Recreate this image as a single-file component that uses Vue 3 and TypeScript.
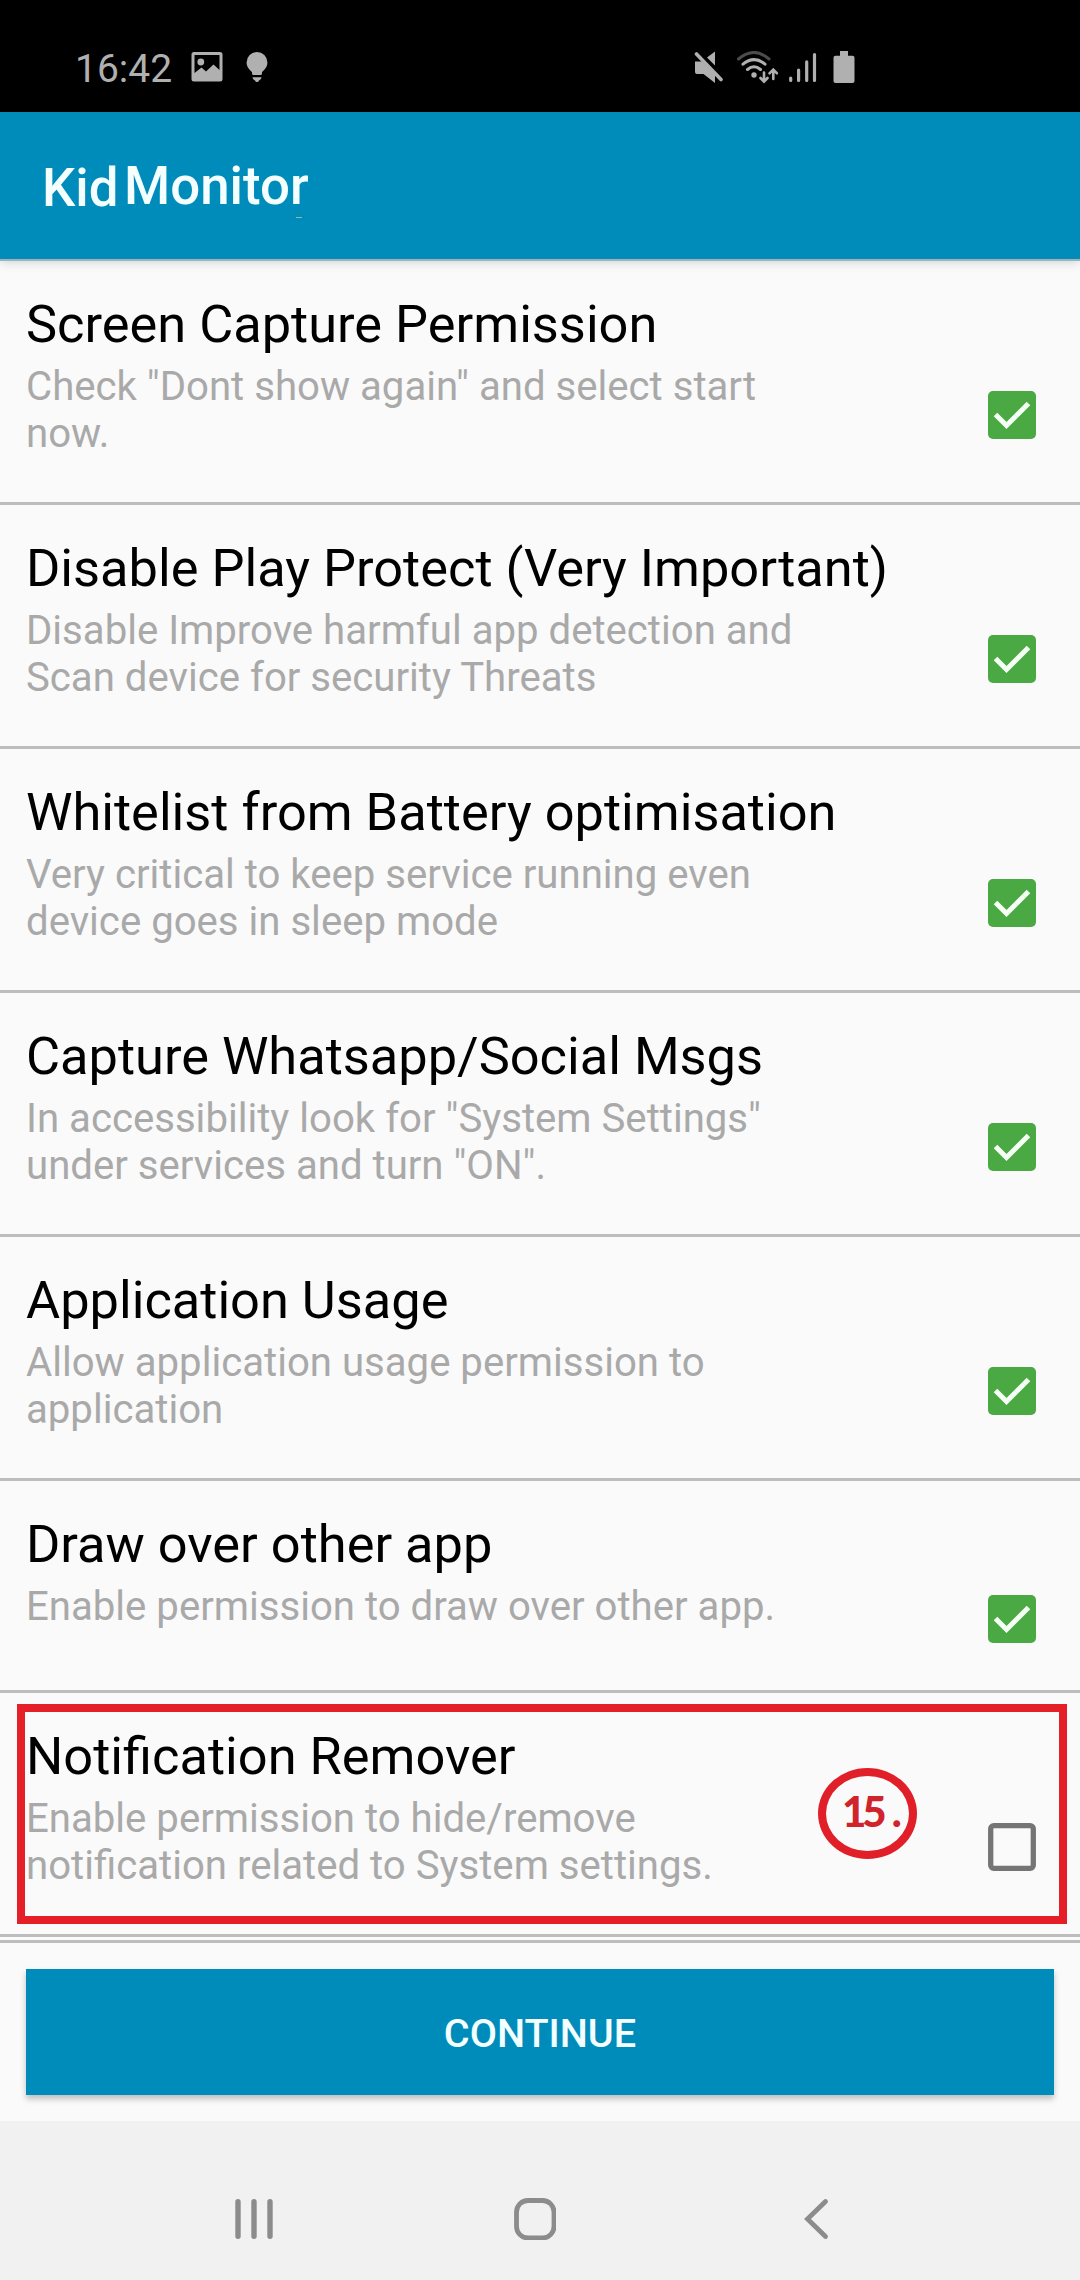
<script setup lang="ts">
interface Permission {
  title: string
  lines: string[]
  granted: boolean
  step?: string
}

const permissions: Permission[] = [
  { title: 'Screen Capture Permission', lines: ['Check "Dont show again" and select start', 'now.'], granted: true },
  { title: 'Disable Play Protect (Very Important)', lines: ['Disable Improve harmful app detection and', 'Scan device for security Threats'], granted: true },
  { title: 'Whitelist from Battery optimisation', lines: ['Very critical to keep service running even', 'device goes in sleep mode'], granted: true },
  { title: 'Capture Whatsapp/Social Msgs', lines: ['In accessibility look for "System Settings"', 'under services and turn "ON".'], granted: true },
  { title: 'Application Usage', lines: ['Allow application usage permission to', 'application'], granted: true },
  { title: 'Draw over other app', lines: ['Enable permission to draw over other app.'], granted: true },
  { title: 'Notification Remover', lines: ['Enable permission to hide/remove', 'notification related to System settings.'], granted: false, step: '15' },
]
</script>

<template>
  <div class="screen">
    <div class="status">
      <span class="time">16:42</span>
      <svg class="picture" width="32" height="30" viewBox="0 0 32 30">
        <path fill="#b0b0b0" fill-rule="evenodd" d="M3 0H29Q31.500 0 31.500 2.500V27Q31.500 29.500 29 29.500H3Q.5 29.500 .5 27V2.500Q.5 0 3 0ZM3.500 3V21L10.500 15.500L15 19.500L22.500 12.500L28.500 18V3Z" />
        <circle cx="9.800" cy="10" r="3.400" fill="#b0b0b0" />
      </svg>
      <svg class="bulb" width="22" height="31" viewBox="0 0 22 31">
        <path fill="#b0b0b0" d="M11 0A10.400 10.400 0 0 1 21.400 10.400C21.400 15 18.500 17.500 16 20V21.500Q16 23 14.500 23H7.500Q6 23 6 21.500V20C3.500 17.500 .6 15 .6 10.400A10.400 10.400 0 0 1 11 0ZM6.500 25.300H15.500Q15.500 28 13 28.500Q12.500 30 11 30T9 28.500Q6.500 28 6.500 25.300Z" />
      </svg>
      <div class="signals">
        <svg width="30" height="33" viewBox="0 0 30 33">
          <path fill="#b0b0b0" d="M1 10.500H8L21 23.500V32L9.500 23H3Q1 23 1 21ZM13 6.500L21 .5V14.500Z" />
          <path d="M2.500 3L27 28.500" stroke="#b0b0b0" stroke-width="3.600" stroke-linecap="round" />
        </svg>
        <svg class="wifi" width="42" height="33" viewBox="0 0 42 33" fill="none" stroke="#b0b0b0" stroke-width="3" stroke-linecap="round">
          <path d="M2.500 8Q18-5 33 8" stroke="#4c4c4c" />
          <path d="M7 13.200Q18 4 29 13.200M11.500 18.500Q18 13 24.500 18.500" />
          <circle cx="18" cy="24" r="2.700" fill="#b0b0b0" stroke="none" />
          <path d="M28 21.500V30M24.500 27L28 30.700L31.500 27M37.300 28V19.500M33.500 22.300L37.300 18.500L41 22.300" stroke-width="2.600" />
        </svg>
        <svg class="bars" width="28" height="31" viewBox="0 0 28 31" stroke="#b0b0b0" stroke-width="3.200" stroke-linecap="round">
          <path d="M1.700 26V28.500M9.600 18V28.500M17.700 9.800V28.500M25.500 2.500V28.500" />
        </svg>
        <svg class="battery" width="22" height="33" viewBox="0 0 22 33">
          <path fill="#b0b0b0" d="M7 0H15V4.700H19.500Q21.500 4.700 21.500 6.700V30Q21.500 32 19.500 32H2.500Q.5 32 .5 30V6.700Q.5 4.700 2.500 4.700H7Z" />
        </svg>
      </div>
    </div>

    <header class="appbar">
      <span class="kid">Kid</span><span class="monitor">Monitor</span>
      <i class="speck"></i>
    </header>

    <main class="list">
      <section v-for="p in permissions" :key="p.title" class="row">
        <div class="text">
          <h2>{{ p.title }}</h2>
          <p v-for="line in p.lines" :key="line">{{ line }}</p>
        </div>
        <svg class="check" width="48" height="48" viewBox="0 0 48 48">
          <template v-if="p.granted">
            <rect width="48" height="48" rx="5" fill="#4aa942" />
            <path d="M7.500 23.500L18.500 34.500L40.500 12.500" fill="none" stroke="#f5fff5" stroke-width="5" />
          </template>
          <rect v-else x="2.700" y="2.700" width="42.600" height="42.600" rx="3" fill="none" stroke="#757575" stroke-width="5.300" />
        </svg>
        <template v-if="p.step">
          <div class="highlight"></div>
          <div class="step"><span>{{ p.step }}</span><span class="dot">.</span></div>
        </template>
      </section>
    </main>

    <footer class="actions">
      <button type="button">CONTINUE</button>
    </footer>

    <nav class="nav">
      <svg width="40" height="42" viewBox="0 0 40 42" stroke="#8c8c8c" stroke-width="5.400" stroke-linecap="round">
        <path d="M4 3.700V38.300M20 3.700V38.300M36 3.700V38.300" />
      </svg>
      <svg class="home" width="42" height="42" viewBox="0 0 42 42">
        <rect x="2.500" y="2.500" width="37.500" height="37.500" rx="11.500" fill="none" stroke="#8c8c8c" stroke-width="4.800" />
      </svg>
      <svg class="back" width="25" height="42" viewBox="0 0 25 42" fill="none" stroke="#8c8c8c" stroke-width="4.800" stroke-linecap="round">
        <path d="M21.500 3.500L3.500 21L21.500 38.500" />
      </svg>
    </nav>
  </div>
</template>

<style>
body {
  margin: 0;
}
</style>

<style scoped>
.screen {
  width: 1080px;
  height: 2280px;
  display: flex;
  flex-direction: column;
  overflow: hidden;
  background: #fafafa;
  font-family: Roboto, sans-serif;
}
.status {
  height: 112px;
  box-sizing: border-box;
  padding: 50px 225px 0 75px;
  display: flex;
  align-items: flex-start;
  background: #000;
  color: #b0b0b0;
}
.time {
  width: 116px;
  font-size: 39px;
  line-height: 38px;
  white-space: nowrap;
}
.picture {
  margin-top: 2px;
}
.bulb {
  margin: 2px 0 0 23px;
}
.signals {
  display: flex;
  align-items: flex-start;
  margin-left: auto;
  padding-top: 1px;
}
.wifi {
  margin-left: 12px;
}
.bars {
  margin: 1px 0 0 11px;
}
.battery {
  margin-left: 16px;
}
.appbar {
  position: relative;
  z-index: 1;
  height: 147px;
  box-sizing: border-box;
  border-bottom: 1px solid #2581a0;
  display: flex;
  flex: none;
  padding-left: 42px;
  background: #008cbb;
  color: #f4ffff;
  font-size: 52.800px;
  font-weight: 500;
  line-height: 62px;
  box-shadow: 0 2px 0 #8bb9c9, 0 4px 9px rgba(0, 0, 0, 0.14);
}
.kid {
  width: 82px;
  padding-top: 45px;
}
.monitor {
  padding-top: 43px;
}
.speck {
  position: absolute;
  left: 296px;
  top: 105px;
  width: 6px;
  height: 1px;
  background: #94b9a8;
}
.list {
  padding-top: 2px;
  border-bottom: 3px solid #bdbdbd;
}
.row {
  position: relative;
  min-height: 209px;
  padding: 0 44px 0 26px;
  border-bottom: 3px solid #bdbdbd;
  display: flex;
  justify-content: space-between;
  align-items: center;
}
.row:last-child {
  margin-bottom: 3px;
}
.text {
  align-self: flex-start;
  padding: 32px 0 45px;
}
h2 {
  margin: 0 0 8px;
  font-size: 52.350px;
  font-weight: 400;
  line-height: 62px;
  color: #000;
  white-space: nowrap;
}
p {
  margin: 0;
  font-size: 40.150px;
  line-height: 47px;
  color: #a9a9a9;
  white-space: nowrap;
}
.check {
  margin-top: 67px;
  flex: none;
}
.highlight {
  position: absolute;
  left: 17px;
  top: 11px;
  width: 1050px;
  height: 220px;
  box-sizing: border-box;
  border: 8px solid #e41f27;
}
.step {
  position: absolute;
  left: 818px;
  top: 75px;
  width: 99px;
  height: 91px;
  box-sizing: border-box;
  border: 8px solid #e01f28;
  border-radius: 50%;
  padding-left: 16px;
  display: flex;
  color: #d0232b;
  font-family: Lato, sans-serif;
  font-size: 42px;
  font-weight: 900;
  line-height: 70px;
  letter-spacing: -4px;
}
.dot {
  margin-left: 9px;
}
.actions {
  flex: none;
  height: 178px;
  box-sizing: border-box;
  padding: 26px 26px 0;
}
button {
  display: block;
  width: 100%;
  height: 126px;
  padding: 4px 0 0;
  border: 0;
  background: #008cbb;
  color: #f4ffff;
  font-family: inherit;
  font-size: 39.600px;
  font-weight: 500;
  line-height: 122px;
  box-shadow: 0 4px 6px rgba(0, 0, 0, 0.24);
}
.nav {
  flex: 1;
  box-sizing: border-box;
  padding: 77px 0 0 234px;
  display: flex;
  align-items: flex-start;
  background: #f1f1f1;
}
.home {
  margin-left: 240px;
}
.back {
  margin-left: 248px;
}
</style>
